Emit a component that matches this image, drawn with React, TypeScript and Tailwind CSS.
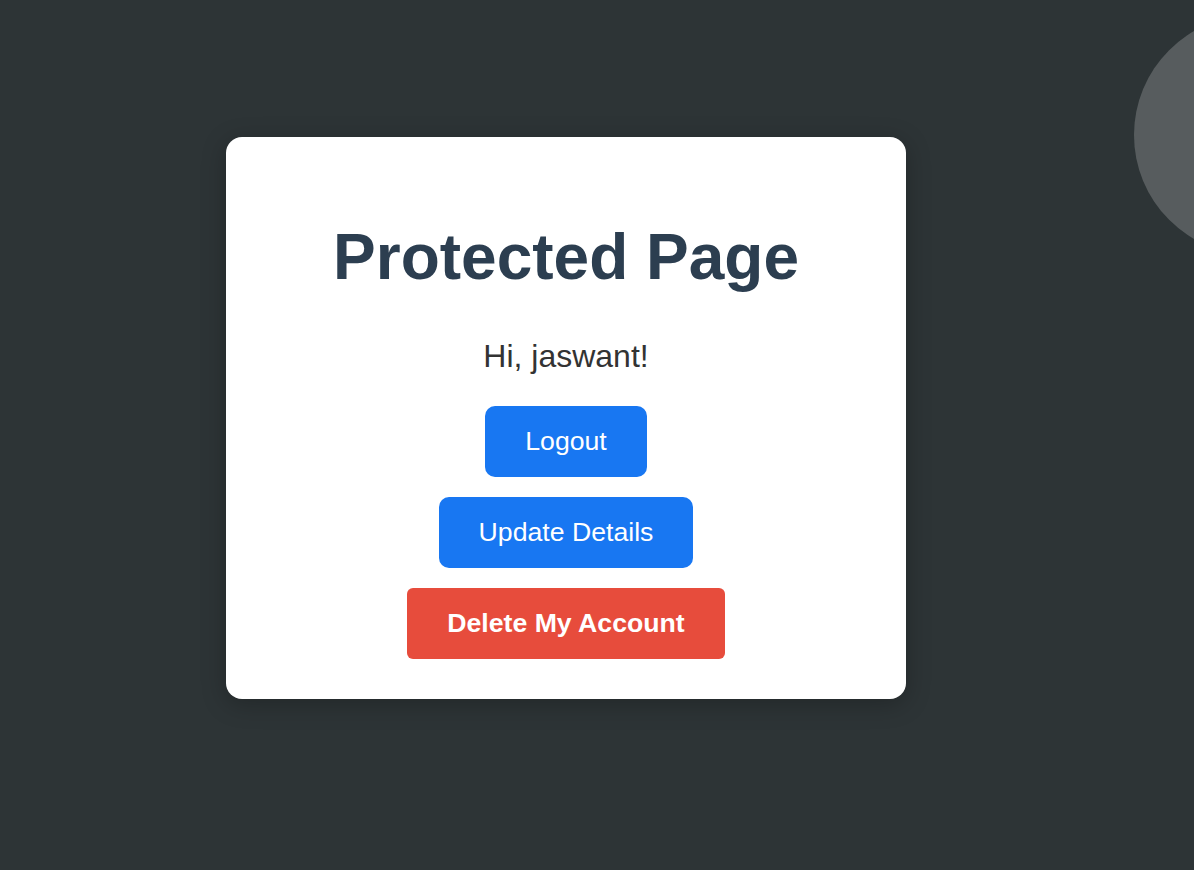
export default function App() {
  return (
    <div className="relative min-h-[870px] w-full overflow-hidden bg-[#2d3436] font-['Liberation_Sans',Arial,sans-serif]">
      {/* decorative circle, top right */}
      <div className="absolute left-[1134px] top-[15px] h-[240px] w-[240px] rounded-full bg-white/20" />

      <div className="pl-[226px] pt-[137px]">
        <div className="w-[680px] rounded-[16px] bg-white px-10 pb-10 pt-[40px] text-center shadow-[0_5px_25px_rgba(0,0,0,0.25)]">
          <h1 className="mb-[43px] mt-[44px] text-[64px] font-bold leading-[73.5px] text-[#2c3e50]">
            Protected Page
          </h1>
          <p className="mb-[31px] text-[32px] leading-[37px] text-[#333333]">Hi, jaswant!</p>
          <div className="flex flex-col items-center gap-5">
            <button className="rounded-[10px] bg-[#1877f2] px-10 py-5 text-[26.67px] leading-[31px] text-white">
              Logout
            </button>
            <button className="rounded-[10px] bg-[#1877f2] px-10 py-5 text-[26.67px] leading-[31px] text-white">
              Update Details
            </button>
            <button className="rounded-[6px] bg-[#e74c3c] px-10 py-5 text-[26.67px] font-bold leading-[31px] text-white">
              Delete My Account
            </button>
          </div>
        </div>
      </div>
    </div>
  );
}
